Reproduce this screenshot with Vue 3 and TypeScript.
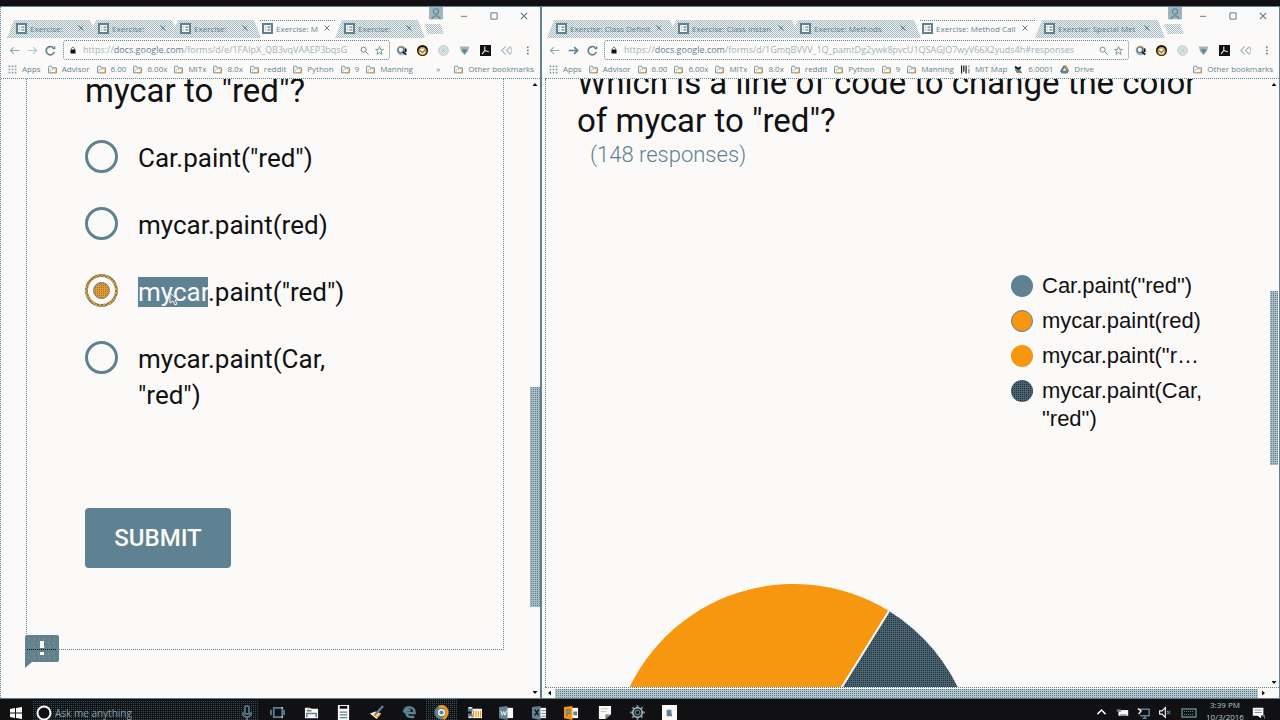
<script setup lang="ts">
interface Shape { d: string; f?: string; s?: string; w?: number }
interface Win {
  id: string
  tabs: string[]
  active: number
  url: string
  forward: boolean
  marks: { icon: string; label: string }[]
}

const T = '#5e8291'
const K = '#111113'
const W = '#fcfaf8'
const O = '#f7960f'

const icons: Record<string, Shape[]> = {
  favicon: [{ d: 'M0 0H16V16H0Z', f: T }, { d: 'M3 3H13V13H3Z', f: W }, { d: 'M5 6h1M5 10h1M8 6h4M8 10h4', s: T, w: 2 }],
  close: [{ d: 'M3 3L13 13M13 3L3 13', s: T, w: 2 }],
  back: [{ d: 'M15 8H2M7 3L2 8L7 13', s: '#8fa8b3', w: 1.6 }],
  forwardOff: [{ d: 'M1 8H14M9 3L14 8L9 13', s: '#b4c5cc', w: 1.6 }],
  forward: [{ d: 'M1 8H14M9 3L14 8L9 13', s: T, w: 2.4 }],
  reload: [{ d: 'M13.5 10A6 6 0 1 1 12 4', s: T, w: 2.4 }, { d: 'M10 6H15V1Z', f: T }],
  lock: [{ d: 'M3 7H13V15H3Z', f: K }, { d: 'M5 8V4Q8 0 11 4V8', s: T, w: 2 }],
  search: [{ d: 'M11 6.5A4.5 4.5 0 1 1 2 6.5A4.5 4.5 0 1 1 11 6.5M10 10L15 15', s: T, w: 1.6 }],
  star: [{ d: 'M8 1L10 6H15L11 9.5L12.5 15L8 11.5L3.5 15L5 9.5L1 6H6Z', s: T, w: 1.4 }],
  ext1: [{ d: 'M15 8A7 7 0 1 1 1 8A7 7 0 1 1 15 8', f: '#9fb4bc' }, { d: 'M11 7A4 4 0 1 1 3 7A4 4 0 1 1 11 7', f: W, s: T, w: 2 }, { d: 'M10 10L15 14M14 5V10', s: K, w: 2.6 }, { d: 'M4 3L8 2', s: O, w: 1.5 }],
  ext2: [{ d: 'M16 8A8 8 0 1 1 0 8A8 8 0 1 1 16 8', f: K }, { d: 'M13 9A5 5 0 1 1 3 9A5 5 0 1 1 13 9', f: W, s: O, w: 2 }, { d: 'M4 8L8 11L12 7', s: T, w: 2 }],
  ext3: [{ d: 'M15 8A7 7 0 1 1 1 8A7 7 0 1 1 15 8', f: '#dbe2e4', s: '#9fb4bc', w: 1 }, { d: 'M5 5L11 11M11 5L5 11', s: '#9fb4bc', w: 1 }],
  ext4: [{ d: 'M1 2H15L13 9L8 15L3 9Z', f: '#9fb4bc' }, { d: 'M4 6H12L8 13Z', f: T }],
  ext5: [{ d: 'M0 0H16V16H0Z', f: K }, { d: 'M7 2V8L3 13M7 8L13 10', s: W, w: 1.5 }],
  ext6: [{ d: 'M7 2L1 8L7 14M14 2L8 8L14 14', s: '#9fb4bc', w: 1.6 }, { d: 'M11 4H15V12H11', s: '#b4c5cc', w: 1.4 }],
  more: [{ d: 'M7 1H10V4H7ZM7 6.5H10V9.5H7ZM7 12H10V15H7Z', f: T }],
  folder: [{ d: 'M1 4V14H15V5H8L6 2H2Z', f: W, s: T, w: 1.5 }, { d: 'M4 14V8L12 6M8 5V9M12 5V9', s: '#9fb4bc', w: 1 }, { d: 'M6 13.5H14V9', s: O, w: 1.6 }],
  apps: [{ d: 'M1 1h3v3H1zM6.500 1h3v3h-3zM12 1h3v3h-3zM1 6.500h3v3H1zM6.500 6.500h3v3h-3zM12 6.500h3v3h-3zM1 12h3v3H1zM6.500 12h3v3h-3zM12 12h3v3h-3z', f: '#86a0ac' }],
  map: [{ d: 'M1 1V15M5 1V12M9 1V15', s: K, w: 2 }, { d: 'M14 1V4M14 6V15', s: T, w: 2 }],
  course: [{ d: 'M1 2L7 4L13 2L11 9L15 14H5L2 9Z', f: T }, { d: 'M2 3L8 7L12 4', s: K, w: 2.5 }, { d: 'M8 14H14', s: O, w: 1.6 }],
  drive: [{ d: 'M6 1L0 11L3 15H13L16 10L11 1Z', f: T }, { d: 'M8 5L5 10H11Z', f: W }, { d: 'M10 2L14 8', s: O, w: 3 }],
  user: [{ d: 'M0 0H16V14H0Z', f: '#9fb4bc' }, { d: 'M11 5A3 3 0 1 1 5 5A3 3 0 1 1 11 5M3 14Q8 6 13 14', s: T, w: 1.2 }],
  min: [{ d: 'M3 8.5H13', s: T, w: 1.6 }],
  max: [{ d: 'M3 3H13V13H3Z', s: T, w: 1.6 }],
}

const task: { name: string; shapes: Shape[] }[] = [
  { name: 'Files', shapes: [{ d: 'M1 3H6L8 4H15V14H1Z', f: W }, { d: 'M3 13V9H13V13M3 6H8', s: T, w: 1.6 }, { d: 'M4 4H6', s: O, w: 1.2 }] },
  { name: 'Calculator', shapes: [{ d: 'M2 0H14V16H2Z', f: W }, { d: 'M4 1H12V4H4Z', f: K }, { d: 'M4 7.500H12M4 10.500H12M4 13.500H12', s: T, w: 1.4 }] },
  { name: 'Pen', shapes: [{ d: 'M1 9L7 7L13 9L8 15Z', f: W }, { d: 'M6 11L15 1', s: T, w: 2.5 }, { d: 'M5 10L9 13L12 9', s: O, w: 1.5 }] },
  { name: 'Edge', shapes: [{ d: 'M2 8Q3 2 8.500 2.500Q13.500 3 13.500 8.500H4.500Q5 14 13 12.500M2 8Q5 4 9 6', s: T, w: 2.6 }] },
  { name: 'Chrome', shapes: [{ d: 'M15.500 8A7.500 7.500 0 1 1 .5 8A7.500 7.500 0 1 1 15.500 8', f: T }, { d: 'M5 2Q13 0 14 7Q14 12 10 15', s: O, w: 3 }, { d: 'M11 8A3 3 0 1 1 5 8A3 3 0 1 1 11 8', f: T, s: W, w: 1.5 }] },
  { name: 'Outlook', shapes: [{ d: 'M5 4H16V14H5Z', f: W }, { d: 'M7 6V13M9.500 6V13M12 6V13M14.500 6V13', s: O, w: 1.3 }, { d: 'M1 2H6V7H1ZM1 9H6V14H1Z', f: T }, { d: 'M2 3H5M2 13H5', s: W, w: 1.5 }] },
  { name: 'Word', shapes: [{ d: 'M8 3H15V14H8Z', f: W }, { d: 'M0 2L9 1V16L0 14Z', f: T }, { d: 'M2 6L3.500 11L5 7L6.500 11L8 6', s: W, w: 1 }] },
  { name: 'Excel', shapes: [{ d: 'M8 3H15V14H8Z', f: W }, { d: 'M0 2L9 1V16L0 14Z', f: T }, { d: 'M3 5L7 11M7 5L3 11', s: K, w: 1.4 }, { d: 'M10 6H15M10 9H15M10 12H15', s: T, w: 1 }] },
  { name: 'PowerPoint', shapes: [{ d: 'M8 3H15V14H8Z', f: W }, { d: 'M0 2L9 1V16L0 14Z', f: O }, { d: 'M3 12V5H6V9H3', s: T, w: 1.6 }, { d: 'M10 7H14V11H10Z', f: T }] },
  { name: 'Notes', shapes: [{ d: 'M2 1H15V10L9 15H2Z', f: W }, { d: 'M9 15V10H15', f: T }, { d: 'M4 4H12M4 7H10', s: '#b4c5cc', w: 1 }, { d: 'M9 12L11 10', s: O, w: 1.5 }] },
  { name: 'Settings', shapes: [{ d: 'M8 0V16M0 8H16M2.500 2.500L13.500 13.500M13.500 2.500L2.500 13.500', s: T, w: 2.2 }, { d: 'M13 8A5 5 0 1 1 3 8A5 5 0 1 1 13 8', f: K, s: '#b4c5cc', w: 1.6 }, { d: 'M10.500 8A2.500 2.500 0 1 1 5.500 8A2.500 2.500 0 1 1 10.500 8', f: K, s: T, w: 1.4 }] },
  { name: 'Recorder', shapes: [{ d: 'M0 0H16V16H0Z', f: W }, { d: 'M5 5H10V8L11 12H5Z', f: T }] },
]

const tray: { name: string; shapes: Shape[] }[] = [
  { name: 'Show hidden icons', shapes: [{ d: 'M3 10L8 5L13 10', s: W, w: 1.8 }] },
  { name: 'Battery', shapes: [{ d: 'M3 5H15V12H3Z', f: W }, { d: 'M1 4H6V7H1Z', f: T }, { d: 'M5 11H13', s: T, w: 1.4 }] },
  { name: 'Network', shapes: [{ d: 'M2 4H15V12H4M7 15H12M9.500 12V15', s: T, w: 1.8 }, { d: 'M1 3L5 6L2 10', s: W, w: 1.6 }] },
  { name: 'Volume', shapes: [{ d: 'M2 6H5L9 2V14L5 10H2Z', f: K, s: W, w: 1.4 }, { d: 'M11 6L15 10M15 6L11 10', s: T, w: 1.5 }] },
]

const f = (label: string, icon = 'folder') => ({ icon, label })
const common = [f('Apps', 'apps'), f('Advisor'), f('6.00'), f('6.00x'), f('MITx'), f('8.0x'), f('reddit'), f('Python'), f('9'), f('Manning')]

const left: Win = {
  id: 'left', active: 3, forward: false, marks: common,
  tabs: ['Exercise: ', 'Exercise: ', 'Exercise: ', 'Exercise: M', 'Exercise: '],
  url: '/forms/d/e/1FAIpX_QB3vqVAAEP3bqsG',
}
const right: Win = {
  id: 'right', active: 3, forward: true,
  marks: [...common, f('MIT Map', 'map'), f('6.0001', 'course'), f('Drive', 'drive')],
  tabs: ['Exercise: Class Definit', 'Exercise: Class Instan', 'Exercise: Methods', 'Exercise: Method Call', 'Exercise: Special Met'],
  url: '/forms/d/1GmqBVVV_1Q_pamtDg2ywk8pvcU1QSAGJO7wyV66X2yuds4h#responses',
}
const windows = [left, right]
const exts = ['ext1', 'ext2', 'ext3', 'ext4', 'ext5', 'ext6']

const options = [
  { sel: '', text: 'Car.paint("red")' },
  { sel: '', text: 'mycar.paint(red)' },
  { sel: 'mycar', text: '.paint("red")' },
  { sel: '', text: 'mycar.paint(Car, "red")' },
]
const legend = [
  { tone: 'teal', text: 'Car.paint("red")' },
  { tone: 'mixed', text: 'mycar.paint(red)' },
  { tone: 'orange', text: 'mycar.paint("r…' },
  { tone: 'dark', text: 'mycar.paint(Car, "red")' },
]
</script>

<template>
  <div class="desktop">
    <div class="windows">
      <section v-for="win in windows" :key="win.id" class="window" :class="win.id">
        <header class="titlebar">
          <div class="tabs">
            <button v-for="(t, i) in win.tabs" :key="i" class="tab" :class="{ active: i === win.active }">
              <svg class="i11" viewBox="0 0 16 16"><path v-for="(p, k) in icons.favicon" :key="k" :d="p.d" :fill="p.f ?? 'none'" :stroke="p.s" :stroke-width="p.w" /></svg>
              <span class="tab-name">{{ t }}</span>
              <svg class="i8" viewBox="0 0 16 16"><path v-for="(p, k) in icons.close" :key="k" :d="p.d" fill="none" :stroke="p.s" :stroke-width="p.w" /></svg>
            </button>
            <button class="newtab" aria-label="New tab"></button>
          </div>
          <div class="controls">
            <button v-for="c in ['user', 'min', 'max', 'close']" :key="c" :class="c" :aria-label="c">
              <svg viewBox="0 0 16 16"><path v-for="(p, k) in icons[c]" :key="k" :d="p.d" :fill="p.f ?? 'none'" :stroke="p.s" :stroke-width="p.w" /></svg>
            </button>
          </div>
        </header>

        <div class="toolbar">
          <button v-for="n in ['back', win.forward ? 'forward' : 'forwardOff', 'reload']" :key="n" class="nav" :aria-label="n">
            <svg class="i11" viewBox="0 0 16 16"><path v-for="(p, k) in icons[n]" :key="k" :d="p.d" :fill="p.f ?? 'none'" :stroke="p.s" :stroke-width="p.w" /></svg>
          </button>
          <div class="omnibox">
            <svg class="i8" viewBox="0 0 16 16"><path v-for="(p, k) in icons.lock" :key="k" :d="p.d" :fill="p.f ?? 'none'" :stroke="p.s" :stroke-width="p.w" /></svg>
            <a class="url" href="#"><span>https://</span><b>docs.google.com</b><span>{{ win.url }}</span></a>
            <svg v-for="n in ['search', 'star']" :key="n" class="i9" viewBox="0 0 16 16"><path v-for="(p, k) in icons[n]" :key="k" :d="p.d" :fill="p.f ?? 'none'" :stroke="p.s" :stroke-width="p.w" /></svg>
          </div>
          <button v-for="n in exts" :key="n" class="ext" :aria-label="n">
            <svg class="i11" viewBox="0 0 16 16"><path v-for="(p, k) in icons[n]" :key="k" :d="p.d" :fill="p.f ?? 'none'" :stroke="p.s" :stroke-width="p.w" /></svg>
          </button>
          <button class="ext" aria-label="Menu">
            <svg class="i9" viewBox="0 0 16 16"><path :d="icons.more[0].d" :fill="T" /></svg>
          </button>
        </div>

        <nav class="bookmarks">
          <a v-for="m in win.marks" :key="m.label" href="#">
            <svg class="i9" viewBox="0 0 16 16"><path v-for="(p, k) in icons[m.icon]" :key="k" :d="p.d" :fill="p.f ?? 'none'" :stroke="p.s" :stroke-width="p.w" /></svg>{{ m.label }}
          </a>
          <span class="overflow"><span v-if="win.id === 'left'">»</span></span>
          <a href="#">
            <svg class="i9" viewBox="0 0 16 16"><path v-for="(p, k) in icons.folder" :key="k" :d="p.d" :fill="p.f ?? 'none'" :stroke="p.s" :stroke-width="p.w" /></svg>Other bookmarks
          </a>
        </nav>

        <div v-if="win.id === 'left'" class="viewport">
          <main class="page">
            <form class="card" @submit.prevent>
              <h1>mycar to "red"?</h1>
              <label v-for="(o, i) in options" :key="i" class="option">
                <input type="radio" name="answer" :checked="i === 2" />
                <span class="answer"><mark v-if="o.sel">{{ o.sel }}</mark>{{ o.text }}</span>
                <svg v-if="o.sel" class="cursor" viewBox="0 0 10 14"><path d="M1 1V11L4 9L6 13L8 12L6 8H9Z" :fill="T" :stroke="W" /></svg>
              </label>
              <button class="submit" type="submit">SUBMIT</button>
              <button class="report" type="button" aria-label="Report a problem">
                <svg viewBox="0 0 34 33">
                  <path d="M2 0H32Q34 0 34 2V25Q34 27 32 27H7L0 33V2Q0 0 2 0Z" :fill="T" />
                  <path d="M4 4H32M8 8H32M4 12H32M8 19H32M4 23H32" :stroke="O" stroke-dasharray="1 4" />
                  <path d="M2 14.500H32" :stroke="K" stroke-dasharray="1 1" />
                  <path d="M17 6V13M17 17V20" :stroke="W" stroke-width="4" />
                </svg>
              </button>
            </form>
          </main>
          <div class="vbar"><i class="up"></i><span class="thumb"></span><i class="down"></i></div>
        </div>

        <div v-else class="viewport">
          <main class="page results">
            <h1>Which is a line of code to change the color of mycar to "red"?</h1>
            <p class="count">(148 responses)</p>
            <ul class="legend">
              <li v-for="l in legend" :key="l.text"><span class="dot" :class="l.tone"></span>{{ l.text }}</li>
            </ul>
            <svg class="pie" viewBox="0 0 364 364">
              <defs>
                <pattern id="weave" width="2" height="2" patternUnits="userSpaceOnUse">
                  <rect width="2" height="2" fill="#4a6571" />
                  <path d="M0 0h1v1H0z" fill="#22313a" shape-rendering="crispEdges" />
                </pattern>
              </defs>
              <path d="M182 182L278 27A182 182 0 1 0 182 364Z" :fill="O" />
              <path d="M182 182L278 27A182 182 0 0 1 182 364Z" fill="url(#weave)" />
              <path d="M182 182L278 27" :stroke="W" stroke-width="2" />
            </svg>
          </main>
          <div class="vbar"><i class="up"></i><span class="thumb"></span><i class="down"></i></div>
          <div class="hbar"><i class="prev"></i><span class="hthumb"></span><i class="next"></i></div>
        </div>
      </section>
    </div>

    <footer class="taskbar">
      <button class="start" aria-label="Start"><svg viewBox="0 0 12 12"><path d="M0 2L5 1V5.500H0ZM6 1L12 0V5.500H6ZM0 6.500H5V11L0 10ZM6 6.500H12V12L6 11Z" :fill="W" /></svg></button>
      <label class="cortana">
        <svg viewBox="0 0 16 16"><circle cx="8" cy="8" r="6.500" :fill="K" :stroke="W" stroke-width="2" /></svg>
        <input type="text" placeholder="Ask me anything" aria-label="Search" />
        <svg viewBox="0 0 16 16"><path d="M6 2Q8 0 10 2V9H6ZM4 7V10Q8 14 12 10V7M8 12V15" :fill="K" :stroke="T" stroke-width="1.5" /></svg>
      </label>
      <button class="taskview" aria-label="Task view"><svg viewBox="0 0 16 16"><path d="M4 3H13V13H4ZM1 5V11M15 5V11" fill="none" :stroke="T" stroke-width="1.8" /><path d="M12 3H14M13 12V14" :stroke="W" /></svg></button>
      <div class="pinned">
        <button v-for="a in task" :key="a.name" :class="{ running: a.name === 'Chrome' }" :aria-label="a.name">
          <svg viewBox="0 0 16 16"><path v-for="(p, k) in a.shapes" :key="k" :d="p.d" :fill="p.f ?? 'none'" :stroke="p.s" :stroke-width="p.w" /></svg>
        </button>
      </div>
      <div class="tray">
        <button v-for="a in tray" :key="a.name" :aria-label="a.name">
          <svg class="i13" viewBox="0 0 16 16"><path v-for="(p, k) in a.shapes" :key="k" :d="p.d" :fill="p.f ?? 'none'" :stroke="p.s" :stroke-width="p.w" /></svg>
        </button>
        <button class="keyboard" aria-label="Keyboard"><svg viewBox="0 0 16 10"><path d="M1 1H15V9H1Z" fill="none" :stroke="T" stroke-width="1.4" /><path d="M3 3.500H13M3 6.500H13" :stroke="T" stroke-dasharray="1 1" /></svg></button>
        <div class="clock"><span>3:39 PM</span><span>10/3/2016</span></div>
        <button class="notes" aria-label="Notifications"><svg class="i13" viewBox="0 0 16 16"><path d="M1 2H14V12H11V15L7 12H1Z" :fill="W" /><path d="M3 5H12M3 8H12" :stroke="T" /><path d="M11 12H16V16" :stroke="T" fill="none" stroke-width="2" /></svg></button>
      </div>
    </footer>
  </div>
</template>

<style>
body { margin: 0; background: #fcfaf8; }
</style>

<style scoped>
.desktop {
  --t: #5e8291; --k: #111113; --w: #fcfaf8; --o: #f7960f;
  --mesh: conic-gradient(var(--t) 25%, transparent 0) 0 0 / 2px 2px;
  --soft: conic-gradient(#a3b7bf 25%, transparent 0 50%, #a3b7bf 0 75%, transparent 0) 0 0 / 2px 2px;
  height: 100vh; box-sizing: border-box; border-top: 6px solid var(--k);
  display: flex; flex-direction: column; overflow: hidden;
  background: var(--w); color: var(--k); font-family: "Open Sans", "Noto Sans", sans-serif;
}
* { box-sizing: border-box; }
button { border: 0; padding: 0; background: none; font: inherit; color: inherit; display: flex; align-items: center; justify-content: center; }
a { color: inherit; text-decoration: none; }
svg { display: block; flex: none; }
.i8 { width: 8px; height: 8px; }
.i9 { width: 9px; height: 9px; }
.i11 { width: 11px; height: 11px; }
.i13 { width: 13px; height: 13px; }

.windows { flex: 1; min-height: 0; display: grid; grid-template-columns: 541fr 739fr; }
.window { display: flex; flex-direction: column; min-width: 0; min-height: 0; border-top: 1px solid var(--t); border-left: 1px dotted var(--t); }
.left { border-right: 1px solid var(--t); }
.right { border-left-style: solid; padding-left: 3px; border-right: 1px solid var(--t); }

.titlebar { display: grid; height: 32px; }
.tabs, .controls { grid-area: 1 / 1; display: flex; }
.tabs { align-items: flex-end; padding-left: 6px; }
.right .tabs { padding-left: 2px; }
.tab {
  width: 90px; height: 18px; margin: 0 -8px 1px 0; padding: 0 12px 2px 9px; gap: 3px;
  font-size: 8px; color: var(--t); background: var(--soft), #f2f4f4;
  clip-path: polygon(7px 0, calc(100% - 7px) 0, 100% 100%, 0 100%);
}
.right .tab { width: 130px; padding-right: 14px; }
.tab.active { background: none; border-top: 1px dotted var(--t); padding-bottom: 3px; }
.tab-name { flex: 1; min-width: 0; overflow: hidden; white-space: nowrap; text-align: left; }
.newtab { width: 20px; height: 10px; margin: 0 0 5px 7px; background: var(--soft); clip-path: polygon(0 0, 80% 0, 100% 100%, 20% 100%); }
.controls { justify-content: flex-end; align-items: flex-start; padding-right: 1px; }
.controls button { width: 30px; height: 18px; }
.controls svg { width: 10px; height: 10px; }
.controls .user { width: 26px; height: 14px; }
.controls .user svg { width: 16px; height: 14px; }

.toolbar { display: flex; align-items: center; height: 23px; padding: 0 2px 1px 4px; }
.nav { width: 18px; height: 18px; }
.right .toolbar { padding-left: 0; }
.right .nav { width: 19px; }
.omnibox { flex: 1; min-width: 0; height: 20px; display: flex; align-items: center; gap: 6px; margin: 0 1px 0 4px; padding: 0 5px; border: 1px dotted var(--t); border-radius: 3px; }
.right .omnibox { margin-left: 2px; }
.url { flex: 1; min-width: 0; overflow: hidden; white-space: nowrap; font-size: 9px; line-height: 14px; color: #9fb4bc; }
.url b { font-weight: 400; color: var(--t); }
.ext { width: 21px; height: 18px; }

.bookmarks { display: flex; align-items: center; gap: 7px; height: 17px; padding: 0 6px 2px 7px; border-bottom: 1px dotted var(--t); font-size: 8px; line-height: 12px; color: var(--t); white-space: nowrap; }
.right .bookmarks { padding-left: 4px; }
.bookmarks a { display: flex; align-items: center; gap: 5px; }
.overflow { flex: 1; text-align: right; padding-right: 7px; }

.viewport { flex: 1; min-height: 0; display: grid; grid-template-columns: minmax(0, 1fr) 10px; grid-template-rows: minmax(0, 1fr) auto; overflow: hidden; }
.page { min-height: 0; overflow: hidden; font-family: Roboto, sans-serif; }
.left .page { padding: 0 26px 48px 25px; }
.card { position: relative; height: 100%; border: 1px dotted var(--t); border-top: 0; padding: 0 58px; display: flow-root; }
h1 { margin: 0; font-size: 33px; font-weight: 400; line-height: 38px; }
.card h1 { margin: -7px 0 30px; }
.option { display: flex; align-items: flex-start; gap: 20px; margin-bottom: 31px; position: relative; width: 280px; font-size: 26px; line-height: 36px; }
.option input { appearance: none; flex: none; width: 33px; height: 33px; margin: 0; border: 3px solid var(--t); border-radius: 50%; }
.option input:checked {
  border: 0; display: grid; place-items: center;
  background: radial-gradient(circle, var(--w) 13px, transparent 14px), conic-gradient(var(--t) 25%, transparent 0 50%, var(--t) 0 75%, transparent 0) 0 0 / 4px 4px, var(--o);
}
.option input:checked::before { content: ""; width: 15px; height: 15px; border-radius: 50%; background: var(--mesh), var(--o); border: 1px solid var(--t); }
mark { background: var(--t); color: var(--w); }
.cursor { position: absolute; left: 84px; top: 18px; width: 10px; height: 14px; }
.submit { width: 146px; height: 60px; margin-top: 95px; border-radius: 4px; background: var(--t); color: var(--w); font-size: 24px; font-weight: 500; }
.report { position: absolute; left: -2px; bottom: -19px; width: 34px; height: 33px; }
.report svg { width: 34px; height: 33px; }

.vbar { display: flex; flex-direction: column; align-items: center; padding: 4px 0; }
.vbar i, .hbar i { flex: none; width: 5px; height: 3px; background: var(--k); clip-path: polygon(50% 0, 100% 100%, 0 100%); }
.vbar .down { clip-path: polygon(0 0, 100% 0, 50% 100%); margin-top: auto; }
.thumb { width: 10px; height: 36%; margin-top: 301px; background: var(--mesh), #a9bcc4; }
.right .thumb { width: 8px; height: 29%; margin-top: 205px; }
.right .vbar { padding-bottom: 3px; }

.results { border-left: 1px dotted var(--t); padding: 0 31px; display: flex; flex-direction: column; }
.results h1 { margin-top: -15px; padding-right: 32px; }
.count { margin: 0 0 0 13px; font-size: 22px; font-weight: 300; line-height: 30px; color: var(--t); }
.legend { list-style: none; margin: 102px 33px 0 auto; padding: 0; width: 194px; font: 22px/28px "Liberation Sans", Arial, sans-serif; }
.legend li { display: flex; gap: 9px; margin-bottom: 7px; }
.dot { flex: none; width: 22px; height: 22px; margin-top: 3px; border-radius: 50%; background: var(--t); }
.dot.orange { background: var(--o); }
.dot.mixed { background: var(--o); border: 1px solid var(--t); }
.dot.dark { background: conic-gradient(#22313a 25%, transparent 0) 0 0 / 2px 2px, #4a6571; }
.pie { width: 364px; height: 364px; margin: 144px 0 0 34px; }
.hbar { grid-column: 1 / -1; height: 11px; display: flex; align-items: center; padding: 0 14px 0 3px; gap: 4px; border-top: 1px dotted var(--t); }
.hthumb { flex: 1; height: 9px; background: var(--mesh), #b4c5cc; }
.hbar .prev { width: 3px; height: 5px; clip-path: polygon(100% 0, 100% 100%, 0 50%); }
.hbar .next { width: 3px; height: 5px; clip-path: polygon(0 0, 100% 50%, 0 100%); }

.taskbar { height: 22px; flex: none; display: flex; align-items: flex-start; overflow: hidden; background: var(--k); color: var(--t); border-top: 1px solid var(--t); }
.taskbar button { height: 27px; flex: none; }
.start { width: 32px; }
.start svg { width: 12px; height: 12px; }
.cortana { width: 227px; height: 23px; flex: none; display: flex; align-items: center; gap: 3px; padding: 0 4px; margin-top: 2px; background: conic-gradient(#38505a 25%, transparent 0) 0 0 / 2px 2px; }
.cortana svg { width: 16px; height: 16px; }
.cortana input { flex: 1; min-width: 0; border: 0; padding: 0; background: none; font: 10px/16px "Open Sans", sans-serif; color: var(--t); }
.cortana input::placeholder { color: #86a0ac; opacity: 1; }
.taskview { width: 36px; }
.taskview svg, .pinned svg { width: 15px; height: 15px; }
.pinned { width: 391px; display: grid; grid-template-columns: repeat(12, 1fr); }
.running { background: conic-gradient(#38505a 25%, transparent 0) 0 0 / 2px 2px; }
.tray { margin-left: auto; display: flex; padding-right: 11px; }
.tray button { width: 21px; }
.tray .keyboard { width: 28px; }
.keyboard svg { width: 16px; height: 10px; }
.clock { width: 44px; display: flex; flex-direction: column; align-items: center; font-size: 8px; line-height: 12px; color: #b4c5cc; }
.tray .notes { width: 22px; }
</style>
